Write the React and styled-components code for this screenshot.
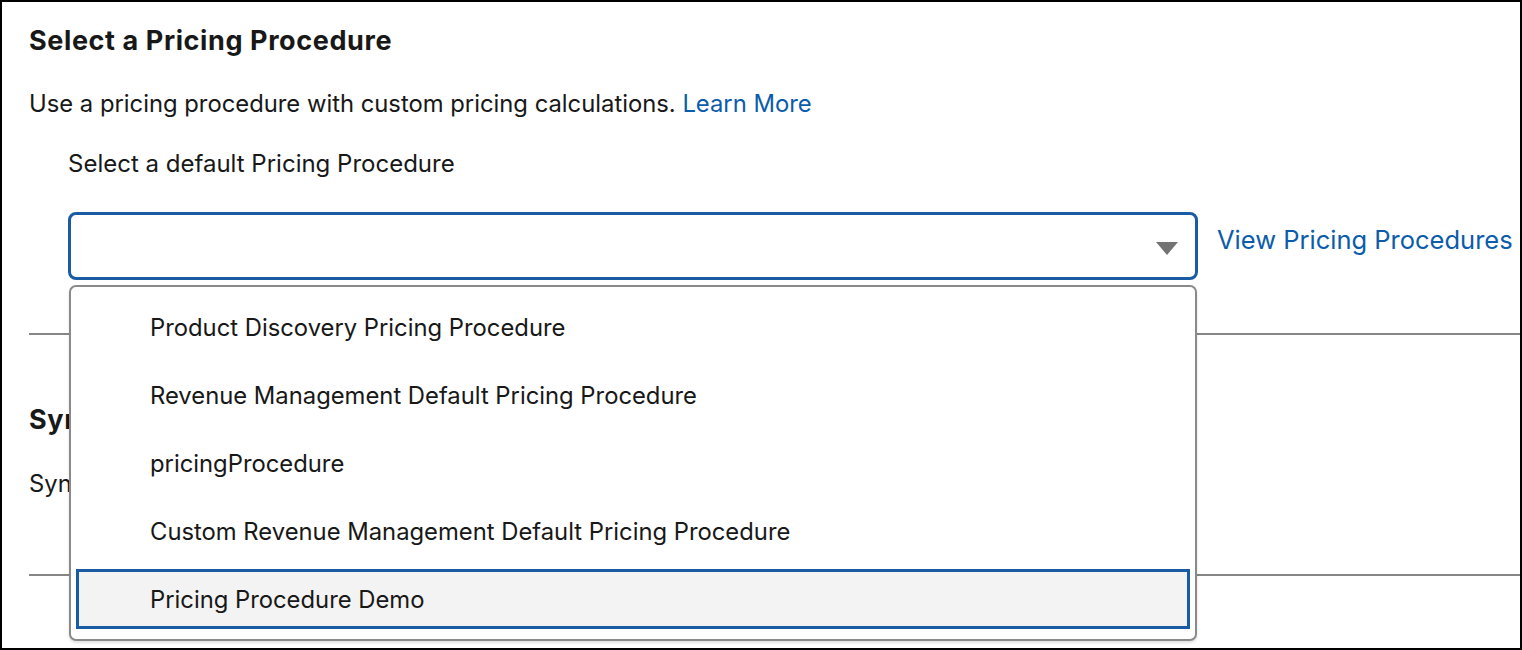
import React from "react";
import styled, { createGlobalStyle } from "styled-components";

const GlobalStyle = createGlobalStyle`
  html, body {
    margin: 0;
    padding: 0;
    background: #fff;
  }
  body {
    font-family: Inter, "Noto Sans", "Liberation Sans", sans-serif;
    color: #181818;
  }
`;

const Frame = styled.div`
  position: relative;
  width: 1522px;
  height: 650px;
  box-sizing: border-box;
  border: 2px solid #000;
  overflow: hidden;
  background: #fff;
`;

const Section = styled.section`
  padding: ${(p) => p.$pad};
  border-bottom: 2px solid #868686;
  margin-left: 27px;
`;

const Title = styled.h2`
  margin: 0;
  font-size: 27px;
  line-height: 30px;
  font-weight: 700;
  letter-spacing: 0.6px;
`;

const Text = styled.p`
  margin: ${(p) => p.$margin || "0"};
  font-size: 23.8px;
  line-height: 30px;
`;

const Link = styled.a`
  color: #0b5cab;
  text-decoration: none;
  cursor: pointer;
`;

const Field = styled.div`
  margin-left: 39px;
`;

const FieldLabel = styled.div`
  font-size: 24px;
  line-height: 30px;
  margin-top: 30px;
`;

const FieldRow = styled.div`
  display: flex;
  align-items: flex-start;
  gap: 19px;
  margin-top: 33px;
`;

const SelectWrap = styled.div`
  position: relative;
  flex: 0 0 1130px;
`;

const SelectBox = styled.div`
  box-sizing: border-box;
  height: 68px;
  border: 3px solid #1a5ca3;
  border-radius: 8px;
  display: flex;
  align-items: center;
  justify-content: flex-end;
  padding-right: 17px;
  background: #fff;
`;

const Caret = styled.span`
  width: 0;
  height: 0;
  border-left: 11px solid transparent;
  border-right: 11px solid transparent;
  border-top: 13px solid #737373;
  margin-top: 4px;
`;

const SideLink = styled(Link)`
  font-size: 25.5px;
  line-height: 30px;
  margin-top: 13px;
  white-space: nowrap;
`;

const Menu = styled.ul`
  position: absolute;
  z-index: 2;
  top: 73px;
  left: 1px;
  width: 1128px;
  box-sizing: border-box;
  margin: 0;
  list-style: none;
  padding: 10px 5px;
  background: #fff;
  border: 2px solid #8a8a8a;
  border-radius: 7px;
  box-shadow: 0 2px 3px rgba(0, 0, 0, 0.12);
  display: flex;
  flex-direction: column;
  gap: 8px;
`;

const Option = styled.li`
  box-sizing: border-box;
  height: 60px;
  display: flex;
  align-items: center;
  padding-left: 71px;
  font-size: 23.8px;
  color: #181818;
  background: ${(p) => (p.$active ? "#f3f3f3" : "#fff")};
  border: 3px solid ${(p) => (p.$active ? "#1a5ca3" : "transparent")};
`;

const options = [
  "Product Discovery Pricing Procedure",
  "Revenue Management Default Pricing Procedure",
  "pricingProcedure",
  "Custom Revenue Management Default Pricing Procedure",
  "Pricing Procedure Demo",
];

export default function App() {
  return (
    <Frame>
      <GlobalStyle />
      <Section $pad="24px 0 53px 0">
        <Title>Select a Pricing Procedure</Title>
        <Text $margin="33px 0 0 0">
          Use a pricing procedure with custom pricing calculations.{" "}
          <Link>Learn More</Link>
        </Text>
        <Field>
          <FieldLabel>Select a default Pricing Procedure</FieldLabel>
          <FieldRow>
            <SelectWrap>
              <SelectBox>
                <Caret />
              </SelectBox>
              <Menu>
                {options.map((o, i) => (
                  <Option key={o} $active={i === options.length - 1}>
                    {o}
                  </Option>
                ))}
              </Menu>
            </SelectWrap>
            <SideLink>View Pricing Procedures</SideLink>
          </FieldRow>
        </Field>
      </Section>
      <Section $pad="70px 0 75px 0">
        <Title>Sync Pricing Procedure</Title>
        <Text $margin="34px 0 0 0">
          Sync pricing data to keep the procedure up to date.
        </Text>
      </Section>
    </Frame>
  );
}
